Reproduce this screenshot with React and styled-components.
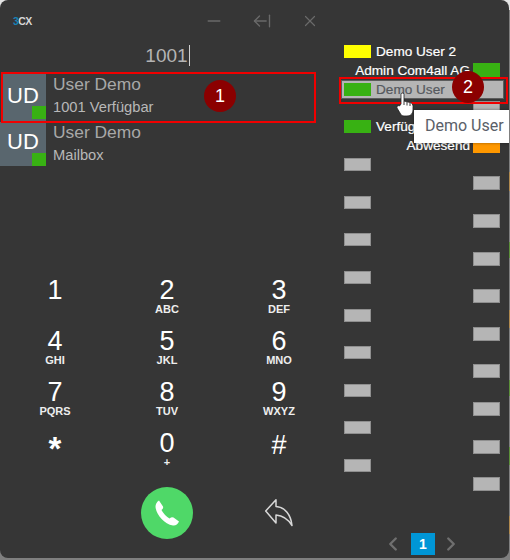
import React from 'react';
import styled, { createGlobalStyle } from 'styled-components';
import { ArrowLeftFromLine, ChevronLeft, ChevronRight, Minus, X } from 'lucide-react';

const GlobalStyle = createGlobalStyle`
  html, body {
    margin: 0;
    padding: 0;
    background: #8d8d8d;
  }
  body {
    font-family: "Liberation Sans", Arial, sans-serif;
  }
`;

const Page = styled.div`
  width: 510px;
  height: 560px;
  overflow: hidden;
  background:
    linear-gradient(
      to bottom,
      #e4e4e4 10px, #7f7f7f 10px,
      #7f7f7f 172px, #b08a50 172px, #b08a50 191px, #7f7f7f 191px,
      #7f7f7f 242px, #5c8f3a 242px, #5c8f3a 258px, #7f7f7f 258px,
      #7f7f7f 310px, #b08a50 310px, #b08a50 328px, #7f7f7f 328px,
      #7f7f7f 380px, #5c8f3a 380px, #5c8f3a 396px, #7f7f7f 396px,
      #7f7f7f 447px, #5c8f3a 447px, #5c8f3a 465px, #7f7f7f 465px,
      #7f7f7f 516px, #b08a50 516px, #b08a50 534px, #7f7f7f 534px
    );
`;

const Window = styled.div`
  position: relative;
  display: flex;
  width: 509px;
  height: 558px;
  background: #363636;
  border-radius: 8px;
  overflow: hidden;
`;

const LeftPane = styled.div`
  display: flex;
  flex-direction: column;
  width: 335px;
  flex: none;
`;

const TitleBar = styled.div`
  display: flex;
  align-items: center;
  height: 42px;
  color: #6a6a6a;
`;

const Logo = styled.div`
  width: 190px;
  padding-left: 13px;
  box-sizing: border-box;
  font-size: 10.5px;
  font-weight: 700;
  letter-spacing: -0.6px;
  color: #d8d8d8;
  span {
    color: #1583b8;
  }
`;

const WinButton = styled.div`
  display: flex;
  justify-content: center;
  width: 48px;
`;

const Display = styled.div`
  display: flex;
  justify-content: center;
  height: 32px;
  font-size: 19px;
  color: #b4b4b4;
  span {
    border-right: 1px solid #d0d0d0;
    padding-right: 1px;
    height: 21px;
    margin-top: 3px;
    line-height: 21px;
  }
`;

const ContactRow = styled.div`
  display: flex;
  height: ${(p) => p.$height}px;
  padding-left: ${(p) => p.$inset}px;
`;

const Avatar = styled.div`
  position: relative;
  width: ${(p) => 46 - p.$inset}px;
  padding-left: ${(p) => 7 - p.$inset}px;
  box-sizing: border-box;
  background: #59666e;
  color: #fff;
  font-size: 22px;
  line-height: ${(p) => (p.$inset ? 44 : 40)}px;
  &::after {
    content: '';
    position: absolute;
    right: 0;
    bottom: ${(p) => p.$dotBottom}px;
    width: 14px;
    height: 13px;
    background: #38b113;
  }
`;

const ContactText = styled.div`
  padding-left: 7px;
  color: #a8a8a8;
`;

const ContactName = styled.div`
  font-size: 17.4px;
  line-height: 21px;
`;

const ContactInfo = styled.div`
  font-size: 14.7px;
  line-height: 20px;
  margin-top: 2px;
  color: #b8b8b8;
`;

const DialPad = styled.div`
  display: grid;
  grid-template-columns: repeat(3, 112px);
  grid-auto-rows: 51px;
  margin: 109px 0 0 -1px;
`;

const DialKey = styled.div`
  display: flex;
  flex-direction: column;
  align-items: center;
  color: #fff;
`;

const Digit = styled.div`
  font-size: 27px;
  line-height: 27px;
  padding-top: 2px;
`;

const StarDigit = styled.div`
  font-size: 33px;
  font-weight: 700;
  line-height: 33px;
  height: 33px;
  padding-top: 4px;
`;

const HashDigit = styled.div`
  font-size: 27px;
  line-height: 29px;
  height: 29px;
  padding-top: 3px;
`;

const Letters = styled.div`
  font-size: 11px;
  line-height: 11px;
  font-weight: 700;
  color: #eee;
`;

const Actions = styled.div`
  display: grid;
  grid-template-columns: repeat(3, 112px);
  margin: 8px 0 0 -1px;
  align-items: center;
  justify-items: center;
`;

const CallButton = styled.div`
  grid-column: 2;
  display: flex;
  align-items: center;
  justify-content: center;
  width: 52px;
  height: 52px;
  border-radius: 50%;
  background: #4fd868;
  color: #fff;
`;

const RightPane = styled.div`
  position: relative;
  flex: 1;
  padding: 42px 9px 0 9px;
`;

const Slot = styled.div`
  position: relative;
  display: flex;
  align-items: center;
  justify-content: ${(p) => (p.$right ? 'flex-end' : 'flex-start')};
  gap: ${(p) => (p.$right ? 3 : 5)}px;
  height: 18.83px;
  font-size: 13.6px;
  white-space: nowrap;
  color: ${(p) => (p.$hover ? '#55595e' : '#fff')};
  ${(p) =>
    p.$hover &&
    `
    &::before {
      content: '';
      position: absolute;
      left: -3px;
      right: -4px;
      top: 0;
      bottom: -1px;
      background: #b5b5b5;
      border: 1px solid #5c5c5c;
      box-sizing: border-box;
    }
  `}
`;

const SlotLabel = styled.span`
  position: relative;
  -webkit-text-stroke: 0.2px currentColor;
`;

const LineKey = styled.div`
  position: relative;
  flex: none;
  width: 27px;
  height: ${(p) => (p.$right ? 14 : 13)}px;
  box-sizing: border-box;
  background: ${(p) => p.$color || '#b5b5b5'};
  border: 1px solid ${(p) => (p.$color ? p.$color : '#8f8f8f')};
`;

const Pager = styled.div`
  position: absolute;
  left: 47px;
  bottom: 3px;
  display: flex;
  align-items: center;
  gap: 5px;
  color: #6f6f6f;
`;

const PageNumber = styled.div`
  width: 24px;
  height: 22px;
  margin-left: 2px;
  background: #0096d6;
  color: #fff;
  font-size: 14px;
  font-weight: 700;
  line-height: 22px;
  text-align: center;
`;

const RedBox = styled.div`
  position: absolute;
  left: ${(p) => p.$left}px;
  top: ${(p) => p.$top}px;
  width: ${(p) => p.$width}px;
  height: ${(p) => p.$height}px;
  box-sizing: border-box;
  border: 2px solid #f00000;
`;

const Marker = styled.div`
  position: absolute;
  left: ${(p) => p.$left}px;
  top: ${(p) => p.$top}px;
  width: 32px;
  height: 32px;
  border-radius: 50%;
  background: #8b0000;
  color: #fff;
  font-size: 18px;
  line-height: 32px;
  text-align: center;
`;

const Tooltip = styled.div`
  position: absolute;
  left: 414px;
  top: 110px;
  width: 96px;
  height: 33px;
  padding-left: 11px;
  box-sizing: border-box;
  background: #fff;
  box-shadow: 0 0 3px rgba(0, 0, 0, 0.4);
  color: #5a6068;
  font-family: Roboto, sans-serif;
  font-size: 16px;
  line-height: 32px;
`;

const Cursor = styled.svg`
  position: absolute;
  left: 395px;
  top: 91px;
`;

const digits = [
  ['1', ''], ['2', 'ABC'], ['3', 'DEF'],
  ['4', 'GHI'], ['5', 'JKL'], ['6', 'MNO'],
  ['7', 'PQRS'], ['8', 'TUV'], ['9', 'WXYZ'],
];

const GREEN = '#38b113';

// the two key columns are staggered, so odd slots sit on the right
const slots = Array.from({ length: 24 }, (_, i) => ({ right: i % 2 === 1 }));
slots[0] = { color: '#ffff00', label: 'Demo User 2' };
slots[1] = { right: true, color: GREEN, label: 'Admin Com4all AG' };
slots[2] = { color: GREEN, label: 'Demo User', hover: true };
slots[4] = { color: GREEN, label: 'Verfügbar' };
slots[5] = { right: true, color: '#ff9800', label: 'Abwesend' };

export default function App() {
  return (
    <Page>
      <GlobalStyle />
      <Window>
        <LeftPane>
          <TitleBar>
            <Logo>
              <span>3</span>CX
            </Logo>
            <WinButton>
              <Minus size={20} strokeWidth={1.6} />
            </WinButton>
            <WinButton>
              <ArrowLeftFromLine size={20} strokeWidth={1.6} />
            </WinButton>
            <WinButton>
              <X size={18} strokeWidth={1.6} />
            </WinButton>
          </TitleBar>
          <Display>
            <span>1001</span>
          </Display>
          <ContactRow $height={48} $inset={3}>
            <Avatar $inset={3} $dotBottom={3}>UD</Avatar>
            <ContactText>
              <ContactName>User Demo</ContactName>
              <ContactInfo>1001 Verfügbar</ContactInfo>
            </ContactText>
          </ContactRow>
          <ContactRow $height={44} $inset={0}>
            <Avatar $inset={0} $dotBottom={0}>UD</Avatar>
            <ContactText>
              <ContactName>User Demo</ContactName>
              <ContactInfo>Mailbox</ContactInfo>
            </ContactText>
          </ContactRow>
          <DialPad>
            {digits.map(([digit, letters]) => (
              <DialKey key={digit}>
                <Digit>{digit}</Digit>
                {letters && <Letters>{letters}</Letters>}
              </DialKey>
            ))}
            <DialKey>
              <StarDigit>*</StarDigit>
            </DialKey>
            <DialKey>
              <Digit>0</Digit>
              <Letters>+</Letters>
            </DialKey>
            <DialKey>
              <HashDigit>#</HashDigit>
            </DialKey>
          </DialPad>
          <Actions>
            <CallButton>
              <svg width="28" height="28" viewBox="0 0 28 28" fill="currentColor">
                <path d="M6 1.5 10 7.5Q10.5 9 9.5 10L8.5 11Q11 16 16.5 19.5L18 18.5Q19 17.8 20.5 18.5L26 22.5Q24 27 20 26.5C11 25 3.5 16 2.5 8 2.5 3.5 6 1.5 6 1.5Z" />
              </svg>
            </CallButton>
            <svg width="32" height="32" viewBox="0 0 32 32" fill="none" stroke="#d8d8d8" strokeWidth="1.5" strokeLinejoin="round">
              <path d="M2.7 14 13 2.7v6.8C22 10 28 18 29 28.5 25 22 20 18.5 13 18v8Z" />
            </svg>
          </Actions>
        </LeftPane>
        <RightPane>
          {slots.map((slot, i) => (
            <Slot key={i} $right={slot.right} $hover={slot.hover}>
              {slot.right && slot.label && <SlotLabel>{slot.label}</SlotLabel>}
              <LineKey $right={slot.right} $color={slot.color} />
              {!slot.right && slot.label && <SlotLabel>{slot.label}</SlotLabel>}
            </Slot>
          ))}
          <Pager>
            <ChevronLeft size={22} strokeWidth={2.6} />
            <PageNumber>1</PageNumber>
            <ChevronRight size={22} strokeWidth={2.6} />
          </Pager>
        </RightPane>
        <RedBox $left={1} $top={72} $width={315} $height={51} />
        <RedBox $left={339} $top={77} $width={169} $height={27} />
        <Marker $left={204} $top={80}>1</Marker>
        <Marker $left={452} $top={71}>2</Marker>
        <Cursor width="20" height="26" viewBox="0 0 20 26">
          <path
            d="M6 13V3.5a1.5 1.5 0 0 1 3 0V10l6 1.5c2 .5 3 2 3 4V19c0 3-2 6-6 6H9c-2 0-3-1-4-3L2 17c-.8-1.5 1-3 2.5-2Z"
            fill="#fff"
            stroke="#222"
            strokeWidth="0.8"
          />
          <path d="M9 10v4M12 11v3.5M15 12v3" fill="none" stroke="#222" strokeWidth="0.9" />
        </Cursor>
        <Tooltip>Demo User</Tooltip>
      </Window>
    </Page>
  );
}
